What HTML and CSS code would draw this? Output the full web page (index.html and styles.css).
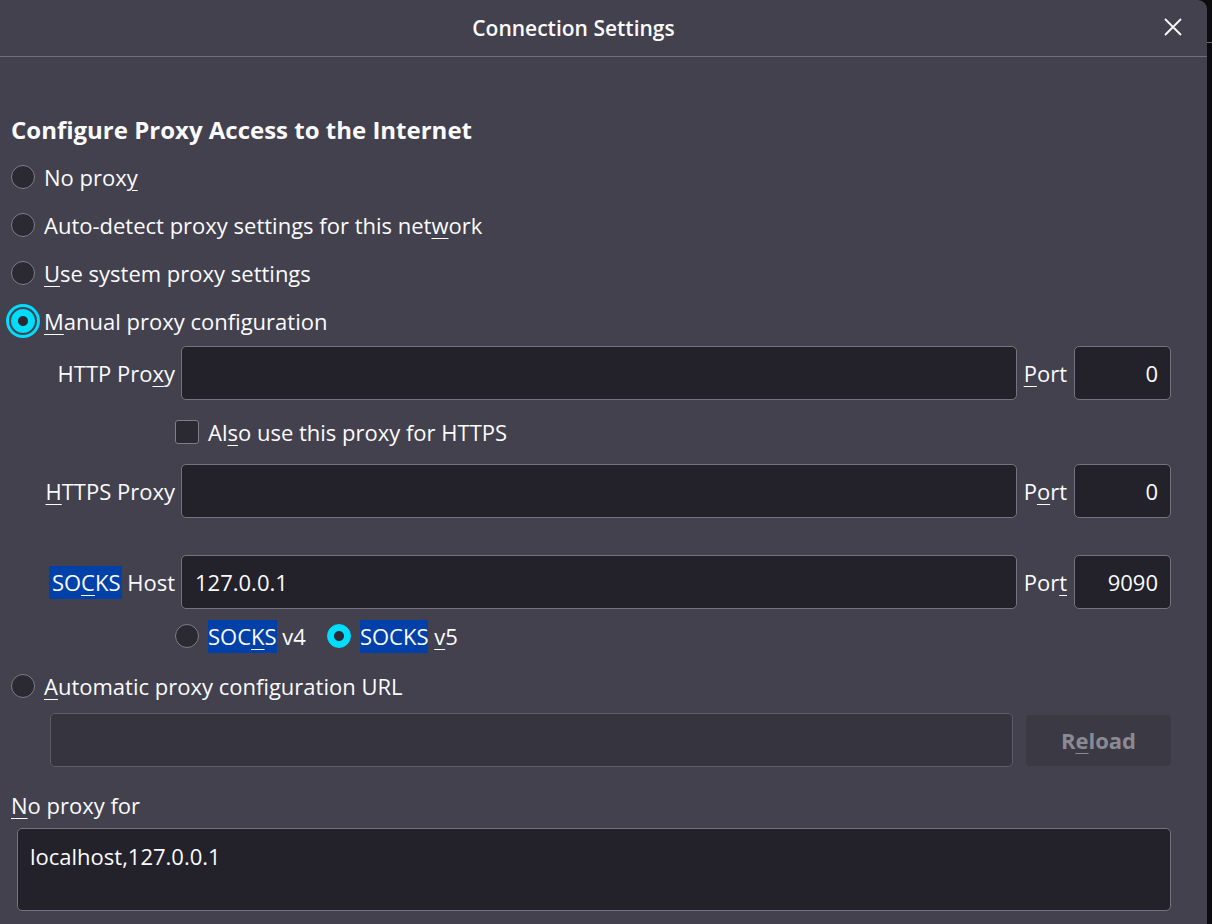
FILE: index.html
```html
<!DOCTYPE html>
<html>
<head>
<meta charset="utf-8">
<link rel="stylesheet" href="styles.css">
</head>
<body>
<div class="dialog">
  <div class="header">
    <div class="title">Connection Settings</div>
    <div class="close">
      <svg width="20" height="20" viewBox="0 0 20 20"><path d="M2 2 L18 18 M18 2 L2 18" stroke="#fbfbfe" stroke-width="1.8" fill="none"/></svg>
    </div>
  </div>
  <div class="content">
    <div class="heading">Configure Proxy Access to the Internet</div>
    <div class="radio-row"><span class="radio"></span><span>No prox<u>y</u></span></div>
    <div class="radio-row"><span class="radio"></span><span>Auto-detect proxy settings for this net<u>w</u>ork</span></div>
    <div class="radio-row"><span class="radio"></span><span><u>U</u>se system proxy settings</span></div>
    <div class="radio-row"><span class="radio checked focused"></span><span><u>M</u>anual proxy configuration</span></div>

    <div class="proxy-grid">
      <div class="lbl">HTTP Pro<u>x</u>y</div>
      <div class="input"></div>
      <div class="plbl"><u>P</u>ort</div>
      <div class="input port">0</div>

      <div class="check-row"><span class="checkbox"></span><span>Al<u>s</u>o use this proxy for HTTPS</span></div>

      <div class="lbl"><u>H</u>TTPS Proxy</div>
      <div class="input"></div>
      <div class="plbl">P<u>o</u>rt</div>
      <div class="input port">0</div>

      <div class="spacer"></div>

      <div class="lbl"><span class="hl">SO<u>C</u>KS</span> Host</div>
      <div class="input value">127.0.0.1</div>
      <div class="plbl">Por<u>t</u></div>
      <div class="input port">9090</div>

      <div class="socks-row">
        <span class="radio"></span><span><span class="hl">SOC<u>K</u>S</span> v4</span>
        <span class="radio checked gap"></span><span><span class="hl">SOCKS</span> <u>v</u>5</span>
      </div>
    </div>

    <div class="radio-row auto"><span class="radio"></span><span><u>A</u>utomatic proxy configuration URL</span></div>
    <div class="auto-url">
      <div class="input disabled"></div>
      <div class="button">R<u>e</u>load</div>
    </div>

    <div class="noproxy-label"><u>N</u>o proxy for</div>
    <div class="textarea">localhost,127.0.0.1</div>
  </div>
</div>
</body>
</html>
```

FILE: styles.css
```css
html, body {
  margin: 0;
  padding: 0;
}
body {
  width: 1212px;
  height: 924px;
  background: linear-gradient(to bottom, #0d0d0f 0, #0d0d0f 42px, #6a6a70 42px, #6a6a70 43px, #0d0d0f 43px);
  font-family: "Open Sans", "Noto Sans", sans-serif;
  color: #fbfbfe;
  overflow: hidden;
}
u {
  text-decoration-thickness: 1px;
  text-underline-offset: 4px;
}
.dialog {
  width: 1207px;
  height: 924px;
  background: #42414d;
  border-top-right-radius: 9px;
  display: flex;
  flex-direction: column;
}
.header {
  height: 56px;
  border-bottom: 1px solid #6f6e79;
  display: flex;
  align-items: center;
  justify-content: center;
  position: relative;
}
.title {
  font-size: 21px;
  font-weight: 600;
  margin-left: -60px;
}
.close {
  position: absolute;
  right: 24px;
  top: 17px;
  width: 20px;
  height: 20px;
}
.content {
  padding: 50px 36px 0 11px;
  font-size: 22px;
}
.heading {
  font-size: 24px;
  font-weight: 700;
  height: 46px;
  line-height: 46px;
}
.radio-row {
  height: 48px;
  display: flex;
  align-items: center;
  gap: 9px;
}
.radio {
  width: 22px;
  height: 22px;
  border-radius: 50%;
  border: 1px solid #7e7d88;
  background: #2b2a33;
  flex: none;
  box-sizing: content-box;
}
.radio.checked {
  border-color: #00ddff;
  background: radial-gradient(circle, #2b2a33 0, #2b2a33 4.5px, #00ddff 5.5px);
}
.radio.focused {
  box-shadow: 0 0 0 2px #42414d, 0 0 0 5px #00ddff;
}
.proxy-grid {
  margin-top: 1px;
  display: grid;
  grid-template-columns: 164px 1fr auto 97px;
  grid-template-rows: 54px 64px 54px 37px 54px 53px;
  column-gap: 6px;
  align-items: center;
}
.lbl {
  text-align: right;
  white-space: nowrap;
}
.plbl {
  padding: 0 1px;
}
.input {
  box-sizing: border-box;
  height: 54px;
  background: #23222b;
  border: 1px solid #75747e;
  border-radius: 5px;
  display: flex;
  align-items: center;
}
.input.value {
  padding-left: 13px;
}
.input.port {
  justify-content: flex-end;
  padding-right: 12px;
}
.check-row {
  grid-column: 2 / 5;
  margin-left: -6px;
  display: flex;
  align-items: center;
  gap: 9px;
}
.checkbox {
  width: 22px;
  height: 22px;
  border: 1px solid #7e7d88;
  border-radius: 3px;
  background: #2b2a33;
}
.spacer {
  grid-column: 1 / 5;
}
.hl {
  background: #0041a9;
  padding: 1px 0 2px;
}
.lbl .hl {
  padding-left: 3px;
  padding-right: 1px;
}
.socks-row {
  grid-column: 2 / 5;
  margin-left: -6px;
  display: flex;
  align-items: center;
  gap: 9px;
}
.radio.gap {
  margin-left: 12px;
}
.radio-row.auto {
  height: 48px;
}
.auto-url {
  margin-top: 3px;
  padding-left: 39px;
  display: flex;
  align-items: center;
  gap: 13px;
}
.auto-url .input {
  flex: 1;
}
.input.disabled {
  background: #35343f;
  border-color: #5d5c66;
}
.button {
  width: 145px;
  height: 51px;
  border-radius: 4px;
  background: #3a3944;
  color: #8b8a93;
  font-weight: 700;
  display: flex;
  align-items: center;
  justify-content: center;
}
.noproxy-label {
  margin-top: 24px;
  height: 28px;
  line-height: 28px;
}
.textarea {
  margin: 9px 0 0 6px;
  height: 83px;
  box-sizing: border-box;
  background: #23222b;
  border: 1px solid #75747e;
  border-radius: 5px;
  padding: 12px 12px;
  line-height: 30px;
}
```
